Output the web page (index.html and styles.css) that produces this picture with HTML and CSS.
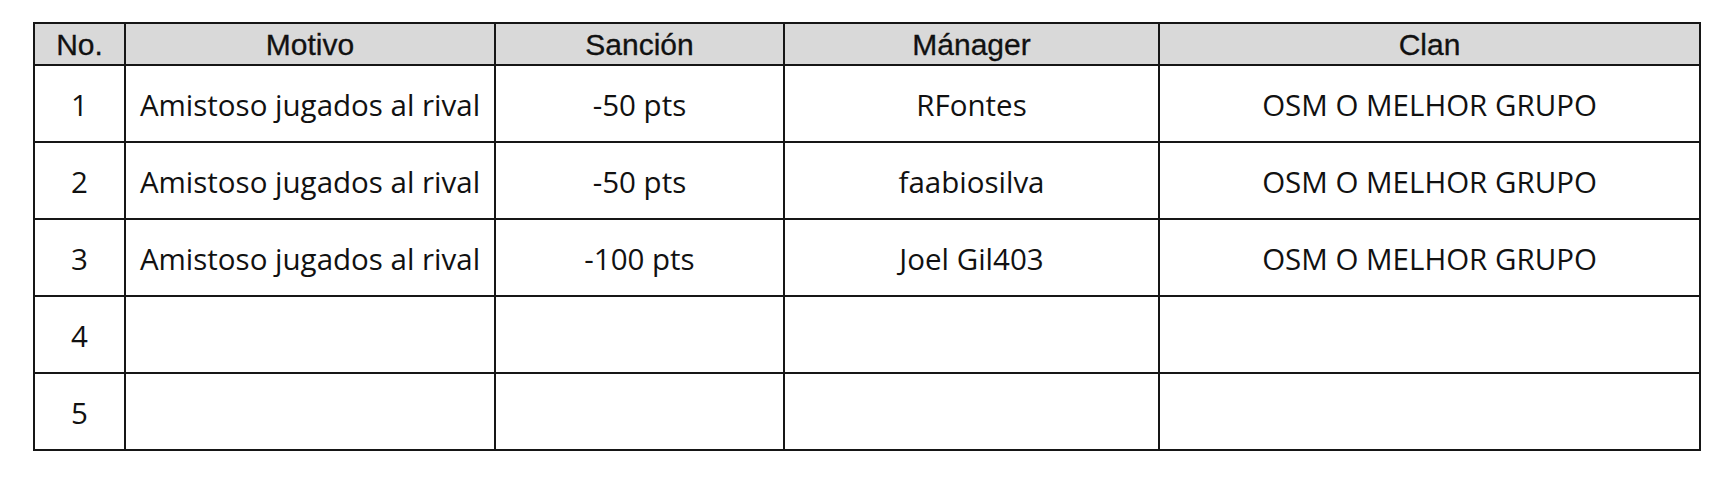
FILE: index.html
```html
<!DOCTYPE html>
<html lang="es">
<head>
<meta charset="utf-8">
<title>Sanciones</title>
<link rel="stylesheet" href="styles.css">
</head>
<body>
<table class="sanctions">
  <colgroup>
    <col class="c-no">
    <col class="c-motivo">
    <col class="c-sancion">
    <col class="c-manager">
    <col class="c-clan">
  </colgroup>
  <thead>
    <tr class="head-row">
      <th>No.</th>
      <th>Motivo</th>
      <th>Sanción</th>
      <th>Mánager</th>
      <th>Clan</th>
    </tr>
  </thead>
  <tbody>
    <tr class="body-row">
      <td>1</td>
      <td>Amistoso jugados al rival</td>
      <td>-50 pts</td>
      <td>RFontes</td>
      <td>OSM O MELHOR GRUPO</td>
    </tr>
    <tr class="body-row">
      <td>2</td>
      <td>Amistoso jugados al rival</td>
      <td>-50 pts</td>
      <td>faabiosilva</td>
      <td>OSM O MELHOR GRUPO</td>
    </tr>
    <tr class="body-row">
      <td>3</td>
      <td>Amistoso jugados al rival</td>
      <td>-100 pts</td>
      <td>Joel Gil403</td>
      <td>OSM O MELHOR GRUPO</td>
    </tr>
    <tr class="body-row">
      <td>4</td>
      <td></td>
      <td></td>
      <td></td>
      <td></td>
    </tr>
    <tr class="body-row">
      <td>5</td>
      <td></td>
      <td></td>
      <td></td>
      <td></td>
    </tr>
  </tbody>
</table>
</body>
</html>
```
FILE: styles.css
```css
html, body {
  margin: 0;
  padding: 0;
  background: #ffffff;
}

body {
  padding: 22px 0 0 33px;
}

.sanctions {
  border-collapse: collapse;
  table-layout: fixed;
  width: 1666px;
  color: #111111;
}

.c-no { width: 91px; }
.c-motivo { width: 370px; }
.c-sancion { width: 289px; }
.c-manager { width: 375px; }
.c-clan { width: 541px; }

.sanctions th,
.sanctions td {
  border: 2px solid #161616;
  text-align: center;
  vertical-align: middle;
  padding: 0;
}

.head-row {
  height: 42px;
}

.head-row th {
  background: #d9d9d9;
  font-family: "Liberation Sans", Arial, sans-serif;
  font-weight: normal;
  font-size: 30px;
  line-height: 1;
  padding-top: 1px;
  -webkit-text-stroke: 0.3px #111111;
}

.body-row {
  height: 77px;
}

.body-row td {
  font-family: "Open Sans", "Noto Sans", sans-serif;
  font-size: 29.5px;
  line-height: 1;
  padding-top: 3px;
}
```
